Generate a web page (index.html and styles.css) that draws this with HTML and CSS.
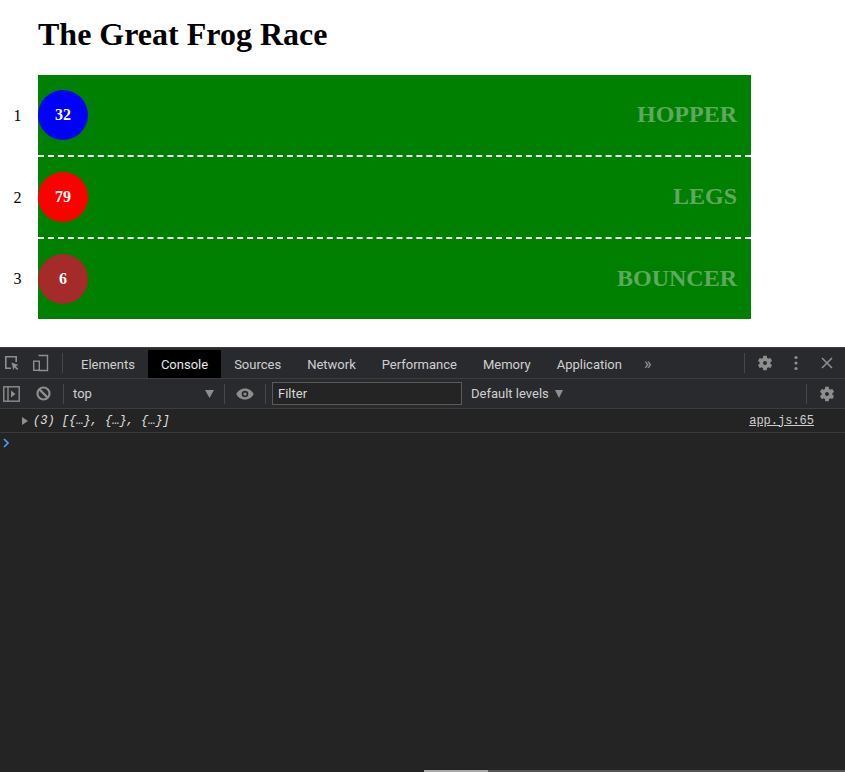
FILE: index.html
```html
<!DOCTYPE html>
<html lang="en">
<head>
<meta charset="utf-8">
<title>The Great Frog Race</title>
<link rel="stylesheet" href="styles.css">
</head>
<body>
<main class="page">
  <h1 class="title">The Great Frog Race</h1>
  <div class="race">
    <div class="lane">
      <div class="lane-num">1</div>
      <div class="track">
        <div class="frog frog-blue">32</div>
        <div class="frog-name">HOPPER</div>
      </div>
    </div>
    <div class="lane">
      <div class="lane-num">2</div>
      <div class="track">
        <div class="frog frog-red">79</div>
        <div class="frog-name">LEGS</div>
      </div>
    </div>
    <div class="lane">
      <div class="lane-num">3</div>
      <div class="track track-last">
        <div class="frog frog-brown">6</div>
        <div class="frog-name">BOUNCER</div>
      </div>
    </div>
  </div>
</main>

<section class="devtools">
  <div class="tabbar">
    <span class="ibtn ib-inspect">
      <svg width="16" height="16" viewBox="0 0 16 16"><path d="M1 1h12v6h-1.6V2.6H2.6v9.8H7V14H1z" fill="#8e8e8e"/><path d="M7.5 7.5l7 2.6-2.8 1.1 2.6 2.6-1.2 1.2-2.6-2.6-1.1 2.8z" fill="#8e8e8e"/></svg>
    </span>
    <span class="ibtn ib-device">
      <svg width="18" height="18" viewBox="0 0 18 18"><path d="M6.5 1.5h9v15h-9" fill="none" stroke="#8e8e8e" stroke-width="1.4"/><rect x="1.7" y="7.2" width="5.6" height="9.1" fill="none" stroke="#8e8e8e" stroke-width="1.4"/></svg>
    </span>
    <span class="vsep sep-tabs"></span>
    <span class="tab">Elements</span>
    <span class="tab tab-active">Console</span>
    <span class="tab">Sources</span>
    <span class="tab">Network</span>
    <span class="tab">Performance</span>
    <span class="tab">Memory</span>
    <span class="tab">Application</span>
    <span class="more">»</span>
    <span class="tab-right">
      <span class="vsep"></span>
      <span class="ibtn ib-gear">
        <svg width="18" height="18" viewBox="0 0 24 24"><path fill="#8e8e8e" fill-rule="evenodd" d="M19.14 12.94c.04-.3.06-.61.06-.94 0-.32-.02-.64-.07-.94l2.03-1.58c.18-.14.23-.41.12-.61l-1.92-3.32c-.12-.22-.37-.29-.59-.22l-2.39.96c-.5-.38-1.03-.7-1.62-.94l-.36-2.54c-.04-.24-.24-.41-.48-.41h-3.84c-.24 0-.43.17-.47.41l-.36 2.54c-.59.24-1.13.57-1.62.94l-2.39-.96c-.22-.08-.47 0-.59.22L2.74 8.87c-.12.21-.08.47.12.61l2.03 1.58c-.05.3-.09.63-.09.94s.02.64.07.94l-2.03 1.58c-.18.14-.23.41-.12.61l1.92 3.32c.12.22.37.29.59.22l2.39-.96c.5.38 1.03.7 1.62.94l.36 2.54c.05.24.24.41.48.41h3.84c.24 0 .44-.17.47-.41l.36-2.54c.59-.24 1.13-.56 1.62-.94l2.39.96c.22.08.47 0 .59-.22l1.92-3.32c.12-.22.07-.47-.12-.61l-2.01-1.58zM12 14.6c-1.43 0-2.6-1.17-2.6-2.6s1.17-2.6 2.6-2.6 2.6 1.17 2.6 2.6-1.17 2.6-2.6 2.6z"/></svg>
      </span>
      <span class="ibtn ib-dots">
        <svg width="4" height="16" viewBox="0 0 4 16"><circle cx="2" cy="2.5" r="1.6" fill="#8e8e8e"/><circle cx="2" cy="8" r="1.6" fill="#8e8e8e"/><circle cx="2" cy="13.5" r="1.6" fill="#8e8e8e"/></svg>
      </span>
      <span class="ibtn ib-close">
        <svg width="14" height="14" viewBox="0 0 14 14"><path d="M2 2l10 10M12 2L2 12" stroke="#8e8e8e" stroke-width="1.6"/></svg>
      </span>
    </span>
  </div>

  <div class="toolbar">
    <span class="ibtn ib-sidebar">
      <svg width="17" height="16" viewBox="0 0 17 16"><rect x="0.8" y="0.8" width="15.4" height="14.4" fill="none" stroke="#8e8e8e" stroke-width="1.4"/><path d="M5 1v14" stroke="#8e8e8e" stroke-width="1.4"/><path d="M8 4.5l4.5 3.5L8 11.5z" fill="#8e8e8e"/></svg>
    </span>
    <span class="ibtn ib-block">
      <svg width="15" height="15" viewBox="0 0 15 15"><circle cx="7.5" cy="7.5" r="6" fill="none" stroke="#8e8e8e" stroke-width="2.2"/><path d="M3.4 3.4l8.2 8.2" stroke="#8e8e8e" stroke-width="2.2"/></svg>
    </span>
    <span class="vsep"></span>
    <span class="context">
      <span class="context-label">top</span>
      <svg class="tri" width="9" height="8" viewBox="0 0 9 8"><path d="M0 0h9L4.5 8z" fill="#8e8e8e"/></svg>
    </span>
    <span class="vsep"></span>
    <span class="ibtn ib-eye">
      <svg width="18" height="12" viewBox="0 0 18 12"><path fill="#8e8e8e" fill-rule="evenodd" d="M9 0.5C4.8 0.5 1.6 3 0.3 6c1.3 3 4.5 5.5 8.7 5.5s7.4-2.5 8.7-5.5C16.4 3 13.2 0.5 9 0.5zM9 9.3a3.3 3.3 0 1 1 0-6.6 3.3 3.3 0 0 1 0 6.6z"/><circle cx="9" cy="6" r="1.6" fill="#8e8e8e"/></svg>
    </span>
    <span class="vsep"></span>
    <span class="filter">Filter</span>
    <span class="levels">Default levels <svg class="tri" width="8" height="8" viewBox="0 0 8 8"><path d="M0 0h8L4 8z" fill="#8e8e8e"/></svg></span>
    <span class="toolbar-right">
      <span class="vsep"></span>
      <span class="ibtn ib-gear2">
        <svg width="18" height="18" viewBox="0 0 24 24"><path fill="#8e8e8e" fill-rule="evenodd" d="M19.14 12.94c.04-.3.06-.61.06-.94 0-.32-.02-.64-.07-.94l2.03-1.58c.18-.14.23-.41.12-.61l-1.92-3.32c-.12-.22-.37-.29-.59-.22l-2.39.96c-.5-.38-1.03-.7-1.62-.94l-.36-2.54c-.04-.24-.24-.41-.48-.41h-3.84c-.24 0-.43.17-.47.41l-.36 2.54c-.59.24-1.13.57-1.62.94l-2.39-.96c-.22-.08-.47 0-.59.22L2.74 8.87c-.12.21-.08.47.12.61l2.03 1.58c-.05.3-.09.63-.09.94s.02.64.07.94l-2.03 1.58c-.18.14-.23.41-.12.61l1.92 3.32c.12.22.37.29.59.22l2.39-.96c.5.38 1.03.7 1.62.94l.36 2.54c.05.24.24.41.48.41h3.84c.24 0 .44-.17.47-.41l.36-2.54c.59-.24 1.13-.56 1.62-.94l2.39.96c.22.08.47 0 .59-.22l1.92-3.32c.12-.22.07-.47-.12-.61l-2.01-1.58zM12 14.6c-1.43 0-2.6-1.17-2.6-2.6s1.17-2.6 2.6-2.6 2.6 1.17 2.6 2.6-1.17 2.6-2.6 2.6z"/></svg>
      </span>
    </span>
  </div>

  <div class="console">
    <div class="msg">
      <svg class="expand" width="6" height="8" viewBox="0 0 6 8"><path d="M0 0l6 4-6 4z" fill="#8e8e8e"/></svg>
      <span class="msg-text">(3) [{…}, {…}, {…}]</span>
      <span class="msg-src">app.js:65</span>
    </div>
    <div class="prompt">
      <svg width="6" height="10" viewBox="0 0 6 10"><path d="M1 1l4 4-4 4" fill="none" stroke="#4f9ef5" stroke-width="1.6"/></svg>
    </div>
  </div>
  <div class="bottom-strip"><span class="strip-a"></span><span class="strip-b"></span><span class="strip-c"></span></div>
</section>
</body>
</html>
```

FILE: styles.css
```css
html, body {
  margin: 0;
  height: 100%;
}
body {
  display: flex;
  flex-direction: column;
  background: #ffffff;
  font-family: "Liberation Serif", "Times New Roman", serif;
  overflow: hidden;
}

/* ---------- page ---------- */
.page {
  flex: none;
  padding: 16px 0 28px 0;
}
.title {
  margin: 0 0 23px 38px;
  font-size: 32px;
  line-height: 36px;
  font-weight: bold;
  color: #000;
}
.race {
  display: flex;
  flex-direction: column;
}
.lane {
  display: flex;
}
.lane-num {
  width: 35px;
  padding-right: 3px;
  display: flex;
  align-items: center;
  justify-content: center;
  font-size: 16px;
  color: #000;
}
.track {
  width: 699px;
  height: 80px;
  background: #008000;
  border-bottom: 2px dashed #ffffff;
  display: flex;
  align-items: center;
  justify-content: space-between;
  padding-right: 14px;
}
.track-last {
  border-bottom: none;
}
.frog {
  width: 50px;
  height: 50px;
  border-radius: 50%;
  display: flex;
  align-items: center;
  justify-content: center;
  color: #fff;
  font-weight: bold;
  font-size: 16px;
}
.frog-blue { background: #0000ff; }
.frog-red { background: #ff0000; }
.frog-brown { background: #a52a2a; }
.frog-name {
  font-size: 24px;
  line-height: 26px;
  margin-bottom: 2px;
  font-weight: bold;
  color: #5fa95f;
}

/* ---------- devtools ---------- */
.devtools {
  flex: 1;
  display: flex;
  flex-direction: column;
  background: #242424;
  border-top: 1px solid #3d3d3d;
  font-family: Roboto, "Noto Sans", sans-serif;
  font-size: 13px;
  color: #d0d0d0;
}
.ibtn {
  display: flex;
  align-items: center;
  justify-content: center;
}
.vsep {
  width: 1px;
  height: 20px;
  background: #474747;
}
.tabbar {
  height: 30px;
  display: flex;
  align-items: center;
  background: #292a2d;
  border-bottom: 1px solid #3d3d3d;
  padding-left: 3px;
}
.ib-inspect { width: 18px; margin-right: 11px; }
.ib-device { width: 18px; }
.sep-tabs { margin-left: 12px; margin-right: 5px; }
.tab {
  height: 28px;
  padding: 0 13px;
  display: flex;
  align-items: center;
  align-self: flex-end;
  white-space: nowrap;
}
.tab-active {
  background: #000;
  color: #e8e8e8;
}
.more {
  margin-left: 9px;
  font-size: 16px;
  color: #a0a0a0;
}
.tab-right {
  margin-left: auto;
  display: flex;
  align-items: center;
  height: 100%;
}
.ib-gear { margin-left: 11px; width: 18px; }
.ib-dots { margin-left: 20px; width: 4px; }
.ib-close { margin-left: 22px; width: 14px; margin-right: 11px; }

.toolbar {
  height: 29px;
  display: flex;
  align-items: center;
  background: #292a2d;
  border-bottom: 1px solid #3d3d3d;
  padding-left: 3px;
}
.ib-sidebar { width: 17px; }
.ib-block { width: 15px; margin-left: 16px; margin-right: 12px; }
.context {
  display: flex;
  align-items: center;
  width: 141px;
  padding-left: 9px;
  padding-right: 10px;
}
.context-label { flex: 1; }
.tri { display: block; }
.ib-eye { width: 18px; margin-left: 11px; margin-right: 11px; }
.filter {
  margin-left: 6px;
  width: 183px;
  height: 21px;
  border: 1px solid #5a5a5a;
  background: #242424;
  display: flex;
  align-items: center;
  padding-left: 5px;
  color: #d8d8d8;
}
.levels {
  margin-left: 9px;
  display: flex;
  align-items: center;
  gap: 6px;
}
.toolbar-right {
  margin-left: auto;
  display: flex;
  align-items: center;
}
.ib-gear2 { margin-left: 11px; margin-right: 9px; width: 18px; }

.console {
  flex: 1;
  background: #242424;
}
.msg {
  height: 23px;
  display: flex;
  align-items: center;
  border-bottom: 1px solid #3a3a3a;
  padding-left: 22px;
  font-family: "Liberation Mono", monospace;
  font-size: 12px;
}
.expand {
  display: block;
  margin-right: 5px;
}
.msg-text {
  font-style: italic;
  color: #e0e0e0;
}
.msg-src {
  margin-left: auto;
  margin-right: 31px;
  text-decoration: underline;
  color: #cfcfcf;
}
.prompt {
  padding: 5px 0 0 3px;
  display: flex;
}
.bottom-strip {
  height: 2px;
  display: flex;
}
.strip-a { width: 424px; background: #242424; }
.strip-b { width: 64px; background: #a8a8a8; }
.strip-c { flex: 1; background: #555555; }
```
